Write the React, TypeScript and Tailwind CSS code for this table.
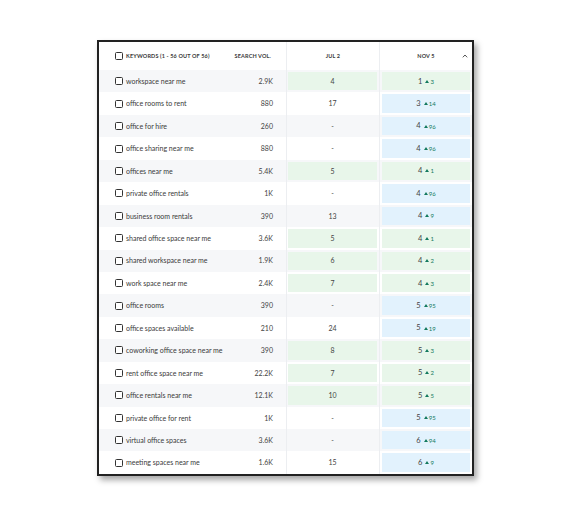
import React from "react";

type Row = { kw: string; vol: string; jul: string; nov: string; d: string };

const rows: Row[] = [
  { kw: "workspace near me", vol: "2.9K", jul: "4", nov: "1", d: "3" },
  { kw: "office rooms to rent", vol: "880", jul: "17", nov: "3", d: "14" },
  { kw: "office for hire", vol: "260", jul: "-", nov: "4", d: "96" },
  { kw: "office sharing near me", vol: "880", jul: "-", nov: "4", d: "96" },
  { kw: "offices near me", vol: "5.4K", jul: "5", nov: "4", d: "1" },
  { kw: "private office rentals", vol: "1K", jul: "-", nov: "4", d: "96" },
  { kw: "business room rentals", vol: "390", jul: "13", nov: "4", d: "9" },
  { kw: "shared office space near me", vol: "3.6K", jul: "5", nov: "4", d: "1" },
  { kw: "shared workspace near me", vol: "1.9K", jul: "6", nov: "4", d: "2" },
  { kw: "work space near me", vol: "2.4K", jul: "7", nov: "4", d: "3" },
  { kw: "office rooms", vol: "390", jul: "-", nov: "5", d: "95" },
  { kw: "office spaces available", vol: "210", jul: "24", nov: "5", d: "19" },
  { kw: "coworking office space near me", vol: "390", jul: "8", nov: "5", d: "3" },
  { kw: "rent office space near me", vol: "22.2K", jul: "7", nov: "5", d: "2" },
  { kw: "office rentals near me", vol: "12.1K", jul: "10", nov: "5", d: "5" },
  { kw: "private office for rent", vol: "1K", jul: "-", nov: "5", d: "95" },
  { kw: "virtual office spaces", vol: "3.6K", jul: "-", nov: "6", d: "94" },
  { kw: "meeting spaces near me", vol: "1.6K", jul: "15", nov: "6", d: "9" },
];

function Box() {
  return <span className="inline-block w-[8px] h-[8px] shrink-0 rounded-[1.5px] border-[1.3px] border-[#333] bg-white" />;
}

export default function App() {
  return (
    <div className="w-[570px] h-[513px] bg-white pt-[40px] pl-[97px]" style={{ fontFamily: "Lato, 'Open Sans', sans-serif" }}>
      <div className="w-[377px] border-2 border-[#222] bg-white shadow-[3px_4px_6px_rgba(0,0,0,0.35)]">
        <div className="flex h-[28px] text-[5.5px] font-bold text-[#3a3a3a] tracking-[0.15px]">
          <div className="w-[187px] flex items-center pl-[16px] pr-[15px]">
            <Box />
            <span className="ml-[3px]">KEYWORDS (1 - 56 OUT OF 56)</span>
            <span className="ml-auto">SEARCH VOL.</span>
          </div>
          <div className="w-[93px] border-l border-[#eceef1] flex items-center justify-center">JUL 2</div>
          <div className="flex-1 border-l border-[#eceef1] flex items-center justify-center relative">
            NOV 5
            <svg className="absolute right-[4px] top-[12px]" width="6" height="4" viewBox="0 0 6 4">
              <path d="M0.8 3.3 L3 1 L5.2 3.3" fill="none" stroke="#555" strokeWidth="1" />
            </svg>
          </div>
        </div>
        {rows.map((r, i) => {
          const good = r.jul !== "-" && parseInt(r.jul) <= 10;
          return (
            <div key={i} className={`flex h-[22.45px] ${i % 2 === 0 ? "bg-[#f6f7f9]" : "bg-white"}`}>
              <div className="w-[187px] flex items-center pl-[16px] pr-[13px] text-[7px] text-[#3a3a3a]">
                <Box />
                <span className="ml-[3px]">{r.kw}</span>
                <span className="ml-auto text-[#444]">{r.vol}</span>
              </div>
              <div className="w-[93px] border-l border-[#eceef1] py-[2px] pl-[1px] pr-[2px]">
                <div className={`h-full flex items-center justify-center text-[7px] text-[#444] ${good ? "bg-[#e8f6ea]" : ""}`}>{r.jul}</div>
              </div>
              <div className="flex-1 border-l border-[#eceef1] py-[2px] pl-[2px] pr-[2px]">
                <div className={`h-full flex items-center justify-center ${good ? "bg-[#e8f6ea]" : "bg-[#e2f2fd]"}`}>
                  <span className="text-[7.5px] text-[#444]">{r.nov}</span>
                  <svg className="ml-[3px]" width="4" height="3" viewBox="0 0 4 3">
                    <path d="M0 3 L2 0 L4 3 Z" fill="#137a5e" />
                  </svg>
                  <span className="ml-[1px] text-[6px] text-[#137a5e]">{r.d}</span>
                </div>
              </div>
            </div>
          );
        })}
      </div>
    </div>
  );
}
